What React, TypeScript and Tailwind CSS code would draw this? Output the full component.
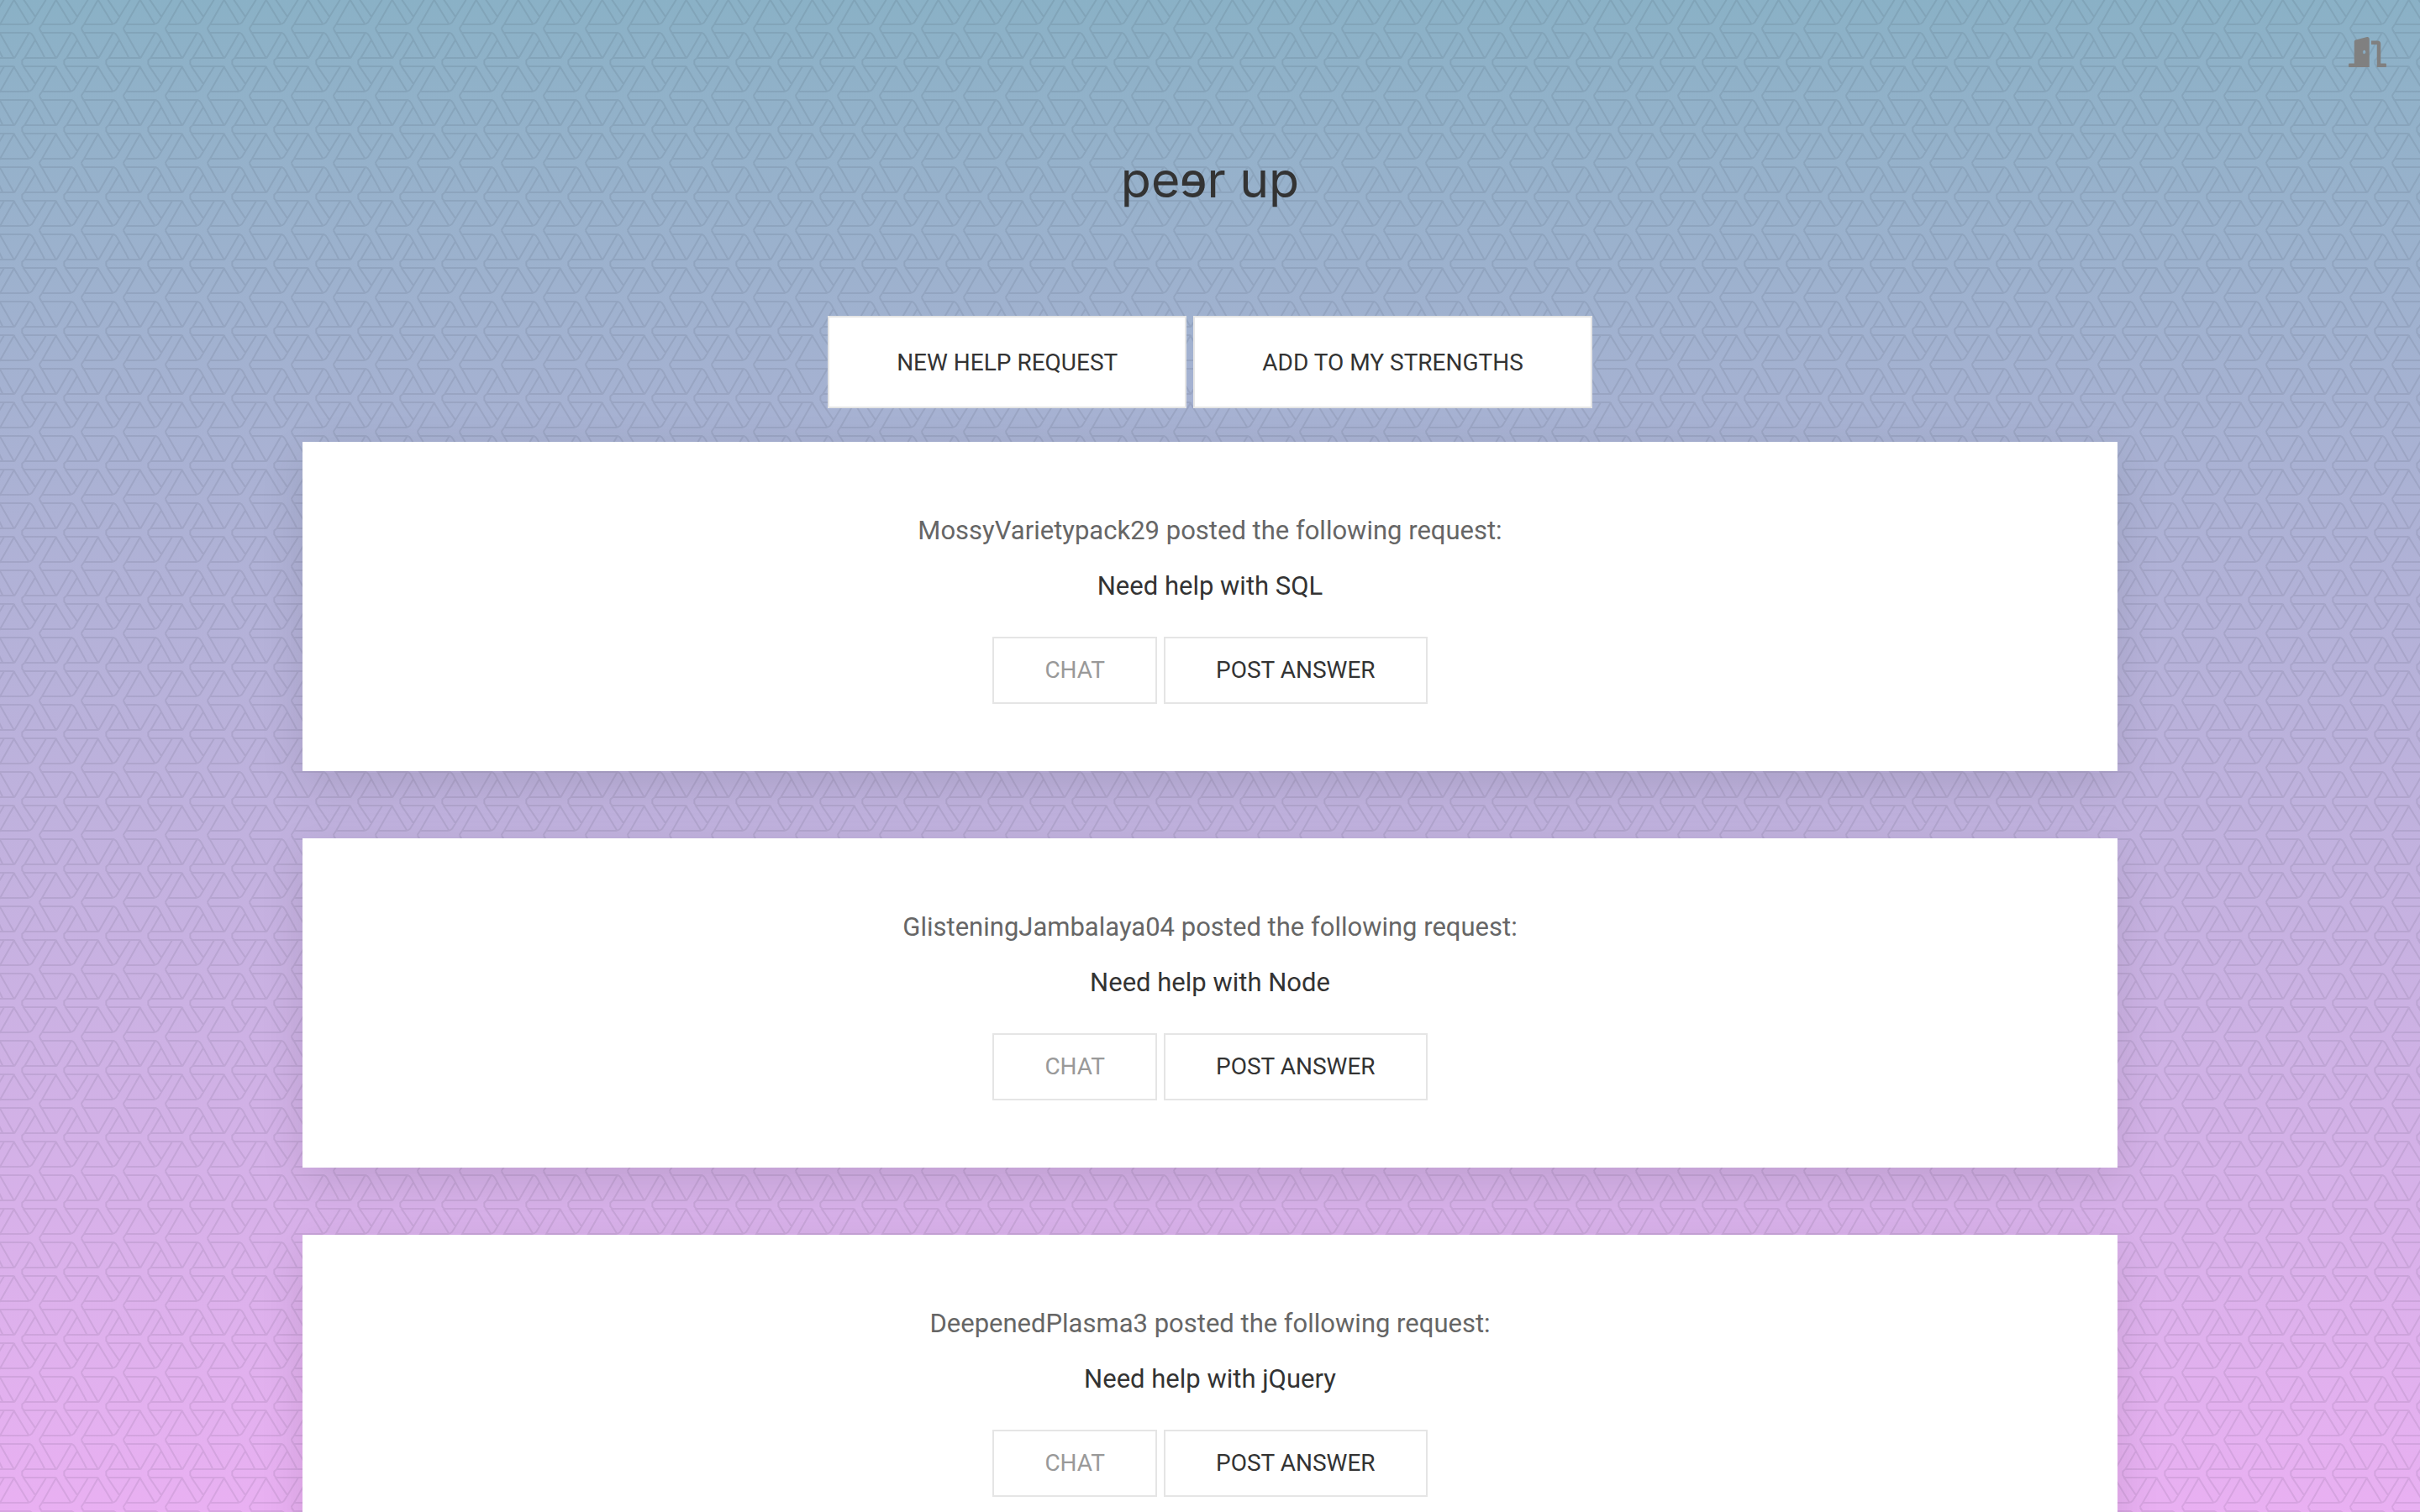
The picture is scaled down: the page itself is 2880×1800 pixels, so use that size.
import React from "react";
import { FaDoorOpen } from "react-icons/fa";

const requests = [
  { user: "MossyVarietypack29", topic: "Need help with SQL" },
  { user: "GlisteningJambalaya04", topic: "Need help with Node" },
  { user: "DeepenedPlasma3", topic: "Need help with jQuery" },
];

/* One repeat of the woven lattice, in a 150 x 240 box. */
const weave = [
  "M-10 87H-48Q-43 87 -36 82L15 -3",
  "M140 102L150 87H250Q258 87 264 80L315 -3",
  "M140 102L148 117H256Q264 119 270 128L311 207",
  "M-10 102L50 207",
  "M-38 117Q-33 121 -28 130L10 207",
  "M-10 102L-2 117H106Q113 119 118 128L161 207",
  "M-10 102L0 87H100Q108 87 114 80L165 -3",
  "M140 102L200 207",
  "M140 102L150 87L202 -3",
  "M-10 102L0 87L50 -1L102 85",
  "M82 -5L127 61",
  "M-68 -5L-23 61",
  "M104 117L52 207",
  "M125 144L88 207L79 215V229L86 237H200",
  "M-25 144L-62 207L-71 215V229L-64 237H50",
  "M88 207H202L275 87",
  "M-62 207H52",
  "M202 207L254 117",
  "M165 237L114 320",
  "M82 235L127 301",
  "M50 237L0 327",
  "M50 237L102 325",
];

function Lattice() {
  return (
    <svg aria-hidden="true" className="absolute inset-0 h-full w-full">
      <defs>
        <pattern id="weave" width="50" height="80" patternUnits="userSpaceOnUse">
          <g transform="scale(0.33333)" fill="none" stroke="#0a0f1a" strokeWidth="6" strokeLinejoin="round">
            <path d={weave.join("")} />
          </g>
        </pattern>
      </defs>
      <rect width="100%" height="100%" fill="url(#weave)" opacity="0.08" />
    </svg>
  );
}

function RequestCard({ user, topic }: { user: string; topic: string }) {
  return (
    <article className="bg-white px-20 pt-[82px] pb-20 text-center text-[31px] leading-[48px] text-[#333] shadow-[0_16px_50px_rgba(0,0,0,0.1)]">
      <p className="text-[#666]">{user} posted the following request:</p>
      <h2 className="mt-[18px]">{topic}</h2>
      <div className="mt-9 flex justify-center gap-2 text-[28px] leading-[76px]">
        <button disabled className="border-2 border-[#e5e5e5] px-[60px] text-[#999]">
          CHAT
        </button>
        <button className="border-2 border-[#e5e5e5] px-[60px]">POST ANSWER</button>
      </div>
    </article>
  );
}

export default function App() {
  return (
    <div className="relative h-screen overflow-hidden bg-linear-to-b from-[#8ab1c6] to-[#e9b0f2] font-['Roboto',sans-serif] text-[#333]">
      <Lattice />
      <div className="relative">
        <header className="relative pt-[166px] text-center">
          <button aria-label="Log out" className="absolute top-[42px] right-10 text-[#808080]">
            <FaDoorOpen className="h-10 w-[45px]" />
          </button>
          <h1 className="font-['Inter',sans-serif] text-[59px] leading-24">peɘr up</h1>
        </header>
        <nav className="mt-[114px] flex justify-center gap-2 text-[28px] leading-[104px]">
          <button className="border-2 border-[#e5e5e5] bg-white px-20 pt-0.5">NEW HELP REQUEST</button>
          <button className="border-2 border-[#e5e5e5] bg-white px-20 pt-0.5">ADD TO MY STRENGTHS</button>
        </nav>
        <main className="mx-auto mt-10 flex w-3/4 flex-col gap-20">
          {requests.map((r) => (
            <RequestCard key={r.user} {...r} />
          ))}
        </main>
      </div>
    </div>
  );
}
